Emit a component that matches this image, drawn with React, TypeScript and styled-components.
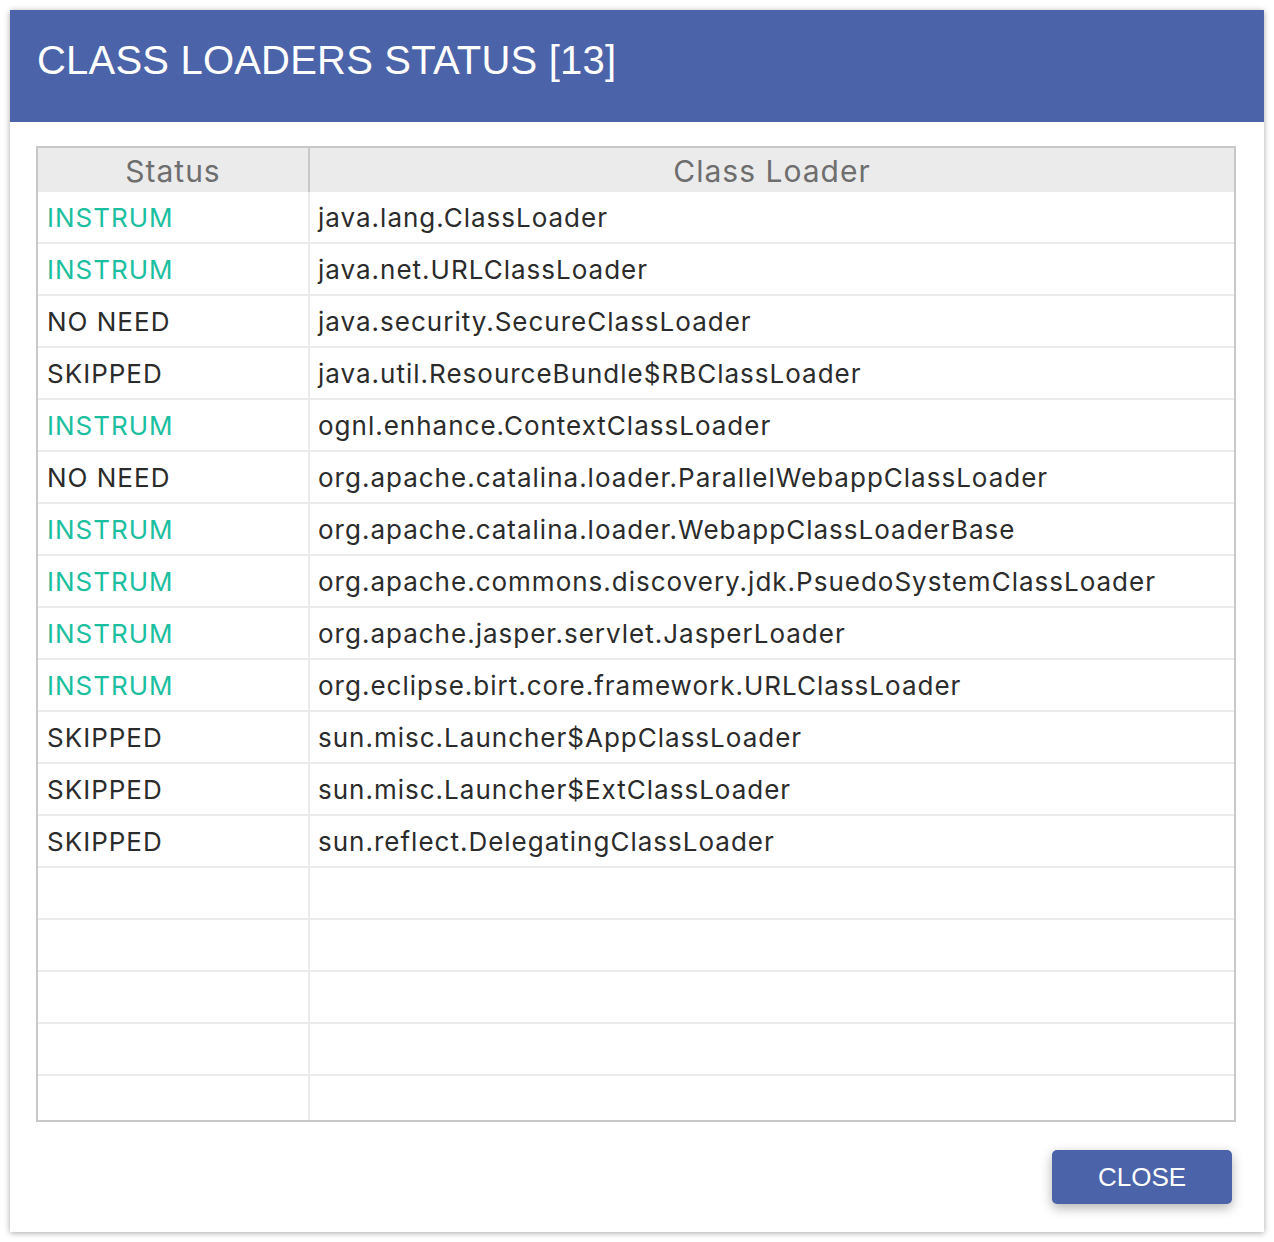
import React from "react";
import styled, { createGlobalStyle } from "styled-components";

const GlobalStyle = createGlobalStyle`
  html, body {
    margin: 0;
    padding: 0;
    background: #ffffff;
  }
  body {
    font-family: "Liberation Sans", Arial, sans-serif;
  }
`;

const Page = styled.div`
  padding: 10px;
  width: 1254px;
`;

const Dialog = styled.div`
  background: #fff;
  height: 1222px;
  box-shadow: 0 1px 6px rgba(0, 0, 0, 0.35);
  display: flex;
  flex-direction: column;
`;

const Header = styled.div`
  background-color: #4b63a8;
  height: 112px;
  box-sizing: border-box;
  padding: 27px 27px 0;
`;

const Title = styled.h1`
  margin: 0;
  color: #fff;
  font-size: 40px;
  font-weight: normal;
  line-height: 46px;
  letter-spacing: 0.2px;
`;

const Body = styled.div`
  flex: 1;
  padding: 24px 28px 28px 26px;
  display: flex;
  flex-direction: column;
`;

const Table = styled.div`
  border: 2px solid #c8c8c8;
  height: 972px;
  overflow: hidden;
  font-family: Inter, "Liberation Sans", sans-serif;
  letter-spacing: 1px;
`;

const Row = styled.div<{ $head?: boolean }>`
  display: grid;
  grid-template-columns: 270px 1fr;
  height: ${(p) => (p.$head ? "44px" : "50px")};
  background: ${(p) => (p.$head ? "#ebebeb" : "#fff")};
  border-bottom: ${(p) => (p.$head ? "none" : "2px solid #ebebeb")};
`;

const HeadCell = styled.div`
  color: #6e6e6e;
  font-size: 30px;
  text-align: center;
  line-height: 46px;
  & + & {
    border-left: 2px solid #c8c8c8;
  }
`;

const Cell = styled.div<{ $tone?: "ok" | "plain" }>`
  font-size: 26px;
  line-height: 52px;
  padding-left: 9px;
  color: ${(p) => (p.$tone === "ok" ? "#1bbf9f" : "#2b2b2b")};
  white-space: nowrap;
  & + & {
    border-left: 2px solid #ebebeb;
    padding-left: 8px;
  }
`;

const Footer = styled.div`
  display: flex;
  justify-content: flex-end;
  padding: 28px 4px 0 0;
`;

const CloseButton = styled.button`
  width: 180px;
  height: 54px;
  border: none;
  border-radius: 5px;
  background: #4b63a8;
  color: #fff;
  font-family: "Liberation Sans", Arial, sans-serif;
  font-size: 26px;
  box-shadow: 0 4px 12px rgba(0, 0, 0, 0.3);
  cursor: pointer;
`;

const loaders: [string, string][] = [
  ["INSTRUM", "java.lang.ClassLoader"],
  ["INSTRUM", "java.net.URLClassLoader"],
  ["NO NEED", "java.security.SecureClassLoader"],
  ["SKIPPED", "java.util.ResourceBundle$RBClassLoader"],
  ["INSTRUM", "ognl.enhance.ContextClassLoader"],
  ["NO NEED", "org.apache.catalina.loader.ParallelWebappClassLoader"],
  ["INSTRUM", "org.apache.catalina.loader.WebappClassLoaderBase"],
  ["INSTRUM", "org.apache.commons.discovery.jdk.PsuedoSystemClassLoader"],
  ["INSTRUM", "org.apache.jasper.servlet.JasperLoader"],
  ["INSTRUM", "org.eclipse.birt.core.framework.URLClassLoader"],
  ["SKIPPED", "sun.misc.Launcher$AppClassLoader"],
  ["SKIPPED", "sun.misc.Launcher$ExtClassLoader"],
  ["SKIPPED", "sun.reflect.DelegatingClassLoader"],
];

export default function App() {
  const empty = Array.from({ length: 5 });
  return (
    <>
      <GlobalStyle />
      <Page>
        <Dialog>
          <Header>
            <Title>CLASS LOADERS STATUS [{loaders.length}]</Title>
          </Header>
          <Body>
            <Table>
              <Row $head>
                <HeadCell>Status</HeadCell>
                <HeadCell>Class Loader</HeadCell>
              </Row>
              {loaders.map(([status, name], i) => (
                <Row key={i}>
                  <Cell $tone={status === "INSTRUM" ? "ok" : "plain"}>{status}</Cell>
                  <Cell>{name}</Cell>
                </Row>
              ))}
              {empty.map((_, i) => (
                <Row key={"e" + i}>
                  <Cell />
                  <Cell />
                </Row>
              ))}
            </Table>
            <Footer>
              <CloseButton>CLOSE</CloseButton>
            </Footer>
          </Body>
        </Dialog>
      </Page>
    </>
  );
}
